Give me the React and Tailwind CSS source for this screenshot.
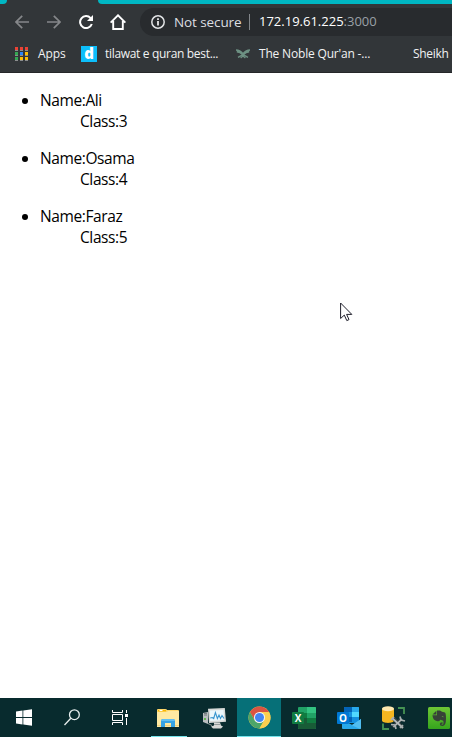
import React from 'react';

const Arrow = ({ flip }) => (
  <svg width="14" height="14" viewBox="0 0 14 14" fill="none" stroke="#85878a" strokeWidth="1.7" className={flip ? 'rotate-180' : ''}>
    <path d="M14 7H1.3M7.2 .8L1 7l6.2 6.2" />
  </svg>
);

const Reload = () => (
  <svg width="14" height="14" viewBox="0 0 14 14">
    <path d="M11.6 3.1A6 6 0 1 0 12.8 9" fill="none" stroke="#fff" strokeWidth="2" />
    <path d="M14 0v6H8z" fill="#fff" />
  </svg>
);

const Home = () => (
  <svg width="16" height="16" viewBox="0 0 16 16" fill="none" stroke="#fff" strokeWidth="1.9">
    <path d="M.6 8.7L8 1.3l7.4 7.4M3.2 7v8h9.6V7" />
  </svg>
);

const Info = () => (
  <svg width="14" height="14" viewBox="0 0 14 14">
    <circle cx="7" cy="7" r="6.2" fill="none" stroke="#e2e4e6" strokeWidth="1.5" />
    <path d="M6.2 6h1.6v4.6H6.2zM6.2 3.3h1.6v1.6H6.2z" fill="#fff" />
  </svg>
);

const APP_COLORS = ['#ea4335', '#ea4335', '#ea4335', '#34a853', '#2684fc', '#fbbc04', '#34a853', '#fbbc04', '#fbbc04'];
const Apps = () => (
  <svg width="13" height="14" viewBox="0 0 13 14">
    {APP_COLORS.map((c, i) => (
      <g key={i}>
        <rect x={(i % 3) * 5} y={Math.floor(i / 3) * 5} width="3" height="4" fill="#8b8d8e" />
        <rect x={(i % 3) * 5} y={Math.floor(i / 3) * 5} width="3" height="3" fill={c} />
      </g>
    ))}
  </svg>
);

const Quran = () => (
  <svg width="14" height="10" viewBox="0 0 14 10" fill="none" stroke="#6d9183">
    <path d="M0 1Q4 1.2 7 4.6Q10 1.2 14 1M.8 2.8Q4 3 7 6Q10 3 13.2 2.8" strokeWidth="1.4" />
    <path d="M2 8.4L7 5.6L12 8.4M4.6 9L7 7L9.4 9" strokeWidth="1.3" />
  </svg>
);

const Windows = () => (
  <svg width="16" height="17" viewBox="0 0 16 17" fill="#fff">
    <path d="M0 2.4L6.5 1.5V8H0zM7.3 1.4L16 .2V8H7.3zM0 8.9h6.5v6.5L0 14.5zM7.3 8.9H16v7.8l-8.7-1.2z" />
  </svg>
);

const Search = () => (
  <svg width="16" height="17" viewBox="0 0 16 17" fill="none" stroke="#e8eeee" strokeWidth="1.3">
    <circle cx="10.4" cy="5.7" r="4.9" />
    <path d="M6.8 9.3L.5 16" />
  </svg>
);

const TaskView = () => (
  <svg width="16" height="15" viewBox="0 0 16 15" fill="none" stroke="#fff">
    <path d="M.5 0v2.5h10V0M.5 15v-2.5h10V15M.5 4.5h10v6H.5zM14.5 0v3M14.5 8v7" />
    <path d="M13 4h3v3h-3z" fill="#fff" stroke="none" />
  </svg>
);

const Explorer = () => (
  <svg width="22" height="19" viewBox="0 0 22 19">
    <path d="M0 1q0-1 1-1h7q2 0 2 1h11q1 0 1 1v14H0z" fill="#ffd76a" />
    <path d="M0 3h10l1-1h11v16H0z" fill="#ffe9a2" />
    <path d="M1 1h8v1.4H1z" fill="#f8b500" />
    <path d="M2.5 1h3v1h-3z" fill="#fff" />
    <path d="M0 16h22v1H0z" fill="#f5d27a" />
    <path d="M4 18v-6q0-2 2-2h10q2 0 2 2v6h-4v-4H8v4z" fill="#36a3e4" />
    <path d="M6 10h10q2 0 2 2H4q0-2 2-2z" fill="#62bff1" />
  </svg>
);

const Monitor = () => (
  <svg width="23" height="21" viewBox="0 0 23 21">
    <path d="M0 5l5-1v12l-5-2z" fill="#b9bec0" />
    <path d="M1 5.4h3M1 7h3" stroke="#6c7779" />
    <rect x="1" y="10" width="2" height="2" fill="#62b852" />
    <path d="M5 .8L21.8 0 23 13.7 6 15z" fill="#d8dad8" />
    <path d="M6.8 2.6l13.7-.6.8 10.3-14.2.8z" fill="#eaf7fc" />
    <path d="M7.2 10l2-.5 1.5 1L12.4 4.5l2 6L16 7l1.5 3.5L19 7.5l2 3" fill="none" stroke="#3795cf" strokeWidth="1.1" />
    <path d="M11 14.5h6l1 3 2 1-2 2h-8l-2-2 3-1z" fill="#d6d8d6" />
    <path d="M5 15.5l4 2M11 16.5h6" stroke="#929b9b" />
  </svg>
);

const Chrome = () => (
  <svg width="23" height="23" viewBox="0 0 48 48">
    <circle cx="24" cy="24" r="23" fill="#fbcf50" />
    <path d="M4.1 12.5A23 23 0 0 1 43.9 12.5H24L14 29.7z" fill="#d95442" />
    <path d="M4.1 12.5L14 29.7Q18 36 24 35.5L34 29.7 24 47A23 23 0 0 1 4.1 12.5z" fill="#4da569" />
    <path d="M33.9 29.7A11.5 11.5 0 0 0 24 12.5h19.9A23 23 0 0 1 24 47z" fill="#fbcf50" />
    <circle cx="24" cy="24" r="11.5" fill="#f3f7fa" />
    <circle cx="24" cy="24" r="9.4" fill="#4285f4" />
  </svg>
);

const Excel = () => (
  <svg width="24" height="22" viewBox="0 0 24 22">
    <rect x="6" width="18" height="22" rx="1" fill="#21a366" />
    <path d="M15 0h8q1 0 1 1v5h-9z" fill="#33c481" />
    <path d="M6 6h9v5H6z" fill="#107c41" />
    <path d="M6 11h9v5H6z" fill="#185c37" />
    <path d="M15 11h9v5h-9z" fill="#107c41" />
    <path d="M6 16h18v5q0 1-1 1H7q-1 0-1-1z" fill="#185c37" />
    <rect y="5" width="12" height="12" rx="1" fill="#107c41" />
    <text x="6" y="14.6" textAnchor="middle" fill="#fff" fontFamily="Open Sans, sans-serif" fontWeight="700" fontSize="10">X</text>
  </svg>
);

const Outlook = () => (
  <svg width="24" height="22" viewBox="0 0 24 22">
    <rect x="7" width="15" height="16" rx="1" fill="#1490df" />
    <path d="M7 1q0-1 1-1h7v5H7z" fill="#0364b8" />
    <path d="M15 0h6q1 0 1 1v4h-7z" fill="#28a8ea" />
    <path d="M15 5h7v5h-7z" fill="#50d9ff" />
    <path d="M7 10h8v5H7z" fill="#0364b8" />
    <path d="M5 12l10 6 9-6v9q0 1-1 1H6q-1 0-1-1z" fill="#28a8ea" />
    <path d="M24 12v9q0 1-1 1L10 16l5 2z" fill="#50bdf0" />
    <rect y="5" width="12" height="12" rx="1" fill="#0078d4" />
    <text x="6" y="14.6" textAnchor="middle" fill="#fff" fontFamily="Open Sans, sans-serif" fontWeight="700" fontSize="10">O</text>
  </svg>
);

const Database = () => (
  <svg width="24" height="24" viewBox="0 0 24 24">
    <path d="M0 2.5v12c0 3.2 12 3.2 12 0v-12z" fill="#f4b620" />
    <ellipse cx="6" cy="2.7" rx="6" ry="2.5" fill="#ffe9b0" />
    <path d="M16 2h6v6M1 17.5V23h6" fill="none" stroke="#469353" strokeWidth="1.8" />
    <path d="M11 12l10 10M10.5 21l9-8" stroke="#343f40" strokeWidth="3.6" />
    <path d="M10 12l11 10M11.5 21l8.5-8" stroke="#b4bbbb" strokeWidth="1.7" />
    <path d="M18 10.5l1 3.5 4 1M9 18.5l4 .5 1 4M9 14l3-3M18 22l3-3" fill="none" stroke="#a9b0b0" strokeWidth="1.7" />
  </svg>
);

const Evernote = () => (
  <svg width="22" height="22" viewBox="0 0 22 22">
    <defs>
      <linearGradient id="leaf" x2="0" y2="1">
        <stop stopColor="#6fc735" />
        <stop offset="1" stopColor="#35a51d" />
      </linearGradient>
    </defs>
    <rect width="22" height="22" rx="1.5" fill="url(#leaf)" />
    <path d="M4.5 7.5L8.4 3.7v3.8zM9 3.5h3l2 1.2 3 .8q1 1 1 6 0 7-3 7.5-3.3.4-3.2-2.1.2-1.7 2.7-1.6v1.4q-1.3 0-1 .8.6.7 1.6-.1.8-1 .2-3.6l-3-1q-1 2-3 1.4Q5 13.5 4.4 8.2H9z" fill="#374238" />
    <path d="M13.5 9.8q1.4-1.2 2.2.4z" fill="#6bbb42" />
  </svg>
);

const TASKS = [
  { icon: Explorer, shift: '-translate-x-px pt-[2px]', open: true },
  { icon: Monitor, shift: 'pt-[2px]' },
  { icon: Chrome, shift: 'pt-px', active: true },
  { icon: Excel, shift: 'pt-px' },
  { icon: Outlook, shift: 'pt-px' },
  { icon: Database, shift: 'pt-px' },
  { icon: Evernote, shift: 'pt-px' },
];

const STUDENTS = [
  { name: 'Ali', grade: 3 },
  { name: 'Osama', grade: 4 },
  { name: 'Faraz', grade: 5 },
];

export default function App() {
  return (
    <div className="relative flex h-[737px] w-[452px] flex-col overflow-hidden bg-white font-['Open_Sans','Noto_Sans',sans-serif]">
      <header className="h-[73px] shrink-0 border-b border-[#252729] bg-[#323639]">
        <div className="flex h-1 justify-between">
          <div className="w-[7px] rounded-br-[6px] bg-[#00b7c3]" />
          <div className="w-[354px] rounded-bl-[6px] bg-[#00b7c3]" />
        </div>
        <div className="flex h-9 items-center pl-[15px]">
          <nav className="flex w-[125px] shrink-0 items-center">
            <div className="w-8"><Arrow /></div>
            <div className="w-8"><Arrow flip /></div>
            <div className="w-[31px]"><Reload /></div>
            <Home />
          </nav>
          <div className="flex h-7 min-w-0 flex-1 items-center whitespace-nowrap rounded-l-full bg-[#282b2e] pl-[11px] text-[14px]">
            <Info />
            <span className="ml-[9px] w-[75px] text-[13.5px] tracking-[-0.1px] text-[#dcdee1]">Not secure</span>
            <span className="h-4 w-px bg-[#82868a]" />
            <span className="ml-[9px] text-[13px] text-white">172.19.61.225<span className="text-[#9aa0a6]">:3000</span></span>
          </div>
        </div>
        <div className="flex h-7 items-center whitespace-nowrap pl-[15px] text-[12px] text-[#f1f2f3]">
          <Apps />
          <span className="ml-[10px] w-[43px] tracking-[-0.1px]">Apps</span>
          <span className="flex h-4 w-4 items-center justify-center bg-[#0dbefa] pb-px text-[15px] leading-none font-extrabold text-white">d</span>
          <span className="ml-2 w-[131px] tracking-[-0.32px]">tilawat e quran best...</span>
          <Quran />
          <span className="ml-[9px] w-[154px] tracking-[-0.18px]">The Noble Qur'an -...</span>
          <span className="tracking-[-0.3px]">Sheikh</span>
        </div>
      </header>

      <main className="flex-1 pt-[17px] text-black">
        <ul className="flex list-disc flex-col gap-4 pl-10 text-[15.5px] leading-[21px] tracking-[-0.4px]">
          {STUDENTS.map((s) => (
            <li key={s.name}>
              Name:{s.name}
              <div className="pl-10">Class:{s.grade}</div>
            </li>
          ))}
        </ul>
      </main>

      <footer className="flex h-[39px] shrink-0 items-stretch overflow-hidden bg-[#082b2e]">
        <div className="flex w-12 shrink-0 items-center justify-center"><Windows /></div>
        <div className="flex w-12 shrink-0 items-center justify-center"><Search /></div>
        <div className="flex w-[51px] shrink-0 items-center pl-4"><TaskView /></div>
        {TASKS.map(({ icon: Icon, shift, open, active }, i) => (
          <div key={i} className="flex w-[45px] shrink-0 pr-px">
            <div className={`flex w-11 flex-col items-center ${active ? 'bg-[#067078]' : ''}`}>
              <div className={`flex flex-1 items-center ${shift}`}><Icon /></div>
              <div className={`h-px ${active ? 'w-full bg-[#76e4eb]' : open ? 'w-9 bg-[#76e4eb]' : 'w-0'}`} />
            </div>
          </div>
        ))}
      </footer>

      <svg className="absolute left-[340px] top-[302px]" width="13" height="20" viewBox="0 0 13 20">
        <path d="M.6 1v15.5l3.7-3.4 2.5 5.5 2.2-1-2.4-5.2h5.2z" fill="#fff" stroke="#20202c" strokeWidth="1" />
      </svg>
    </div>
  );
}
